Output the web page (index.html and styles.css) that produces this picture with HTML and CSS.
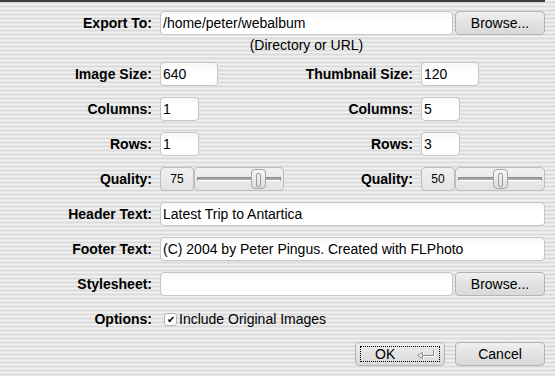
FILE: index.html
```html
<!DOCTYPE html>
<html lang="en">
<head>
    <meta charset="UTF-8">
    <title>Export Web Album</title>
    <link rel="stylesheet" href="styles.css">
</head>
<body>
    <div class="dialog">
        <!-- Export target -->
        <div class="row row-export">
            <label class="lbl">Export To:</label>
            <div class="with-button">
                <div class="field grow">/home/peter/webalbum</div>
                <div class="btn browse">Browse...</div>
            </div>
        </div>
        <div class="row row-note">
            <span></span>
            <div class="note">(Directory or URL)</div>
        </div>

        <!-- Image / thumbnail settings -->
        <div class="row pair">
            <label class="lbl">Image Size:</label>
            <div><div class="field w58">640</div></div>
            <label class="lbl">Thumbnail Size:</label>
            <div><div class="field w58">120</div></div>
        </div>
        <div class="row pair">
            <label class="lbl">Columns:</label>
            <div><div class="field w38">1</div></div>
            <label class="lbl">Columns:</label>
            <div><div class="field w38">5</div></div>
        </div>
        <div class="row pair">
            <label class="lbl">Rows:</label>
            <div><div class="field w38">1</div></div>
            <label class="lbl">Rows:</label>
            <div><div class="field w38">3</div></div>
        </div>
        <div class="row pair">
            <label class="lbl">Quality:</label>
            <div class="value-slider">
                <div class="value">75</div>
                <div class="slider"><span class="track"></span><span class="knob" style="left: 56px"></span></div>
            </div>
            <label class="lbl">Quality:</label>
            <div class="value-slider">
                <div class="value">50</div>
                <div class="slider"><span class="track"></span><span class="knob" style="left: 37px"></span></div>
            </div>
        </div>

        <!-- Page texts -->
        <div class="row">
            <label class="lbl">Header Text:</label>
            <div class="field">Latest Trip to Antartica</div>
        </div>
        <div class="row">
            <label class="lbl">Footer Text:</label>
            <div class="field">(C) 2004 by Peter Pingus. Created with FLPhoto</div>
        </div>
        <div class="row">
            <label class="lbl">Stylesheet:</label>
            <div class="with-button">
                <div class="field grow"></div>
                <div class="btn browse">Browse...</div>
            </div>
        </div>
        <div class="row">
            <label class="lbl">Options:</label>
            <div class="check-line">
                <span class="check">&#10004;</span>
                <span>Include Original Images</span>
            </div>
        </div>

        <!-- Dialog buttons -->
        <div class="actions">
            <div class="btn ok">
                <span class="focus">
                    <span>OK</span>
                    <svg class="ret" width="19" height="10" viewBox="0 0 19 10">
                        <polyline points="16.5,0.5 16.5,6.5 5.5,6.5" fill="none" stroke="#ffffff" stroke-width="1" transform="translate(1,1)"/>
                        <polygon points="0.5,6.5 5.5,3.5 5.5,9.5" fill="none" stroke="#ffffff" stroke-width="1" transform="translate(1,0)"/>
                        <polyline points="16.5,0.5 16.5,6.5 5.5,6.5" fill="none" stroke="#8c8c8c" stroke-width="1"/>
                        <polygon points="0.5,6.5 5.5,3.5 5.5,9.5" fill="none" stroke="#8c8c8c" stroke-width="1"/>
                    </svg>
                </span>
            </div>
            <div class="btn cancel">Cancel</div>
        </div>
    </div>
</body>
</html>
```

FILE: styles.css
```css
/* Basic reset */
* {
    margin: 0;
    padding: 0;
    box-sizing: border-box;
}

/* Striped plastic background */
body {
    width: 555px;
    height: 376px;
    overflow: hidden;
    font-family: 'Liberation Sans', Arial, sans-serif;
    font-size: 14px;
    color: #000;
    background: repeating-linear-gradient(to bottom,
        #f2f2f2 0, #f2f2f2 1px,
        #e4e4e4 1px, #e4e4e4 2px,
        #dbdbdb 2px, #dbdbdb 3px,
        #e6e6e6 3px, #e6e6e6 4px);
}

.dialog {
    border-top: 2px solid #3c3c3c;
    padding-top: 9px;
    width: 545px;
}

/* Form rows */
.row {
    display: grid;
    grid-template-columns: 152px 1fr;
    column-gap: 8px;
    height: 24px;
    margin-bottom: 11px;
}

.row.pair {
    grid-template-columns: 152px 124px 121px 124px;
}

.row-export {
    margin-bottom: 2px;
}

.row-note {
    grid-template-columns: 152px 293px;
    height: 16px;
    margin-bottom: 9px;
}

.note {
    text-align: center;
    line-height: 16px;
}

.lbl {
    font-weight: bold;
    text-align: right;
    line-height: 24px;
    white-space: nowrap;
}

/* Text inputs */
.field {
    height: 24px;
    padding: 0 2px;
    line-height: 22px;
    white-space: nowrap;
    overflow: hidden;
    background: linear-gradient(to bottom, #f7f7f7, #ffffff 40%);
    border: 1px solid #c6c6c6;
    border-radius: 4px;
}

.w58 { width: 58px; }
.w38 { width: 39px; }

.with-button {
    display: flex;
    gap: 2px;
}

.grow {
    flex: 1;
}

/* Buttons */
.btn {
    height: 24px;
    line-height: 22px;
    text-align: center;
    background: linear-gradient(to bottom, #f0f0f0, #e2e2e2 50%, #d9d9d9);
    border: 1px solid #b4b4b4;
    border-radius: 4px;
}

.browse {
    width: 90px;
}

/* Value slider */
.value-slider {
    display: flex;
}

.value {
    width: 34px;
    height: 24px;
    line-height: 22px;
    font-size: 12px;
    text-align: center;
    background: linear-gradient(to bottom, #f0f0f0, #e4e4e4);
    border: 1px solid #bdbdbd;
    border-radius: 4px;
}

.slider {
    position: relative;
    width: 90px;
    height: 24px;
    background: linear-gradient(to bottom, #f0f0f0, #e4e4e4);
    border: 1px solid #bdbdbd;
    border-radius: 4px;
}

.track {
    position: absolute;
    left: 2px;
    right: 2px;
    top: 9px;
    height: 4px;
    border-top: 1px solid #8a8a8a;
    border-bottom: 1px solid #ffffff;
    background: #a8a8a8;
    border-left: 1px solid #8a8a8a;
    border-right: 1px solid #8a8a8a;
}

.knob {
    position: absolute;
    top: 1px;
    width: 15px;
    height: 20px;
    background: linear-gradient(to bottom, #f6f6f6, #dedede);
    border: 1px solid #a6a6a6;
    border-radius: 4px;
}

.knob::after {
    content: "";
    position: absolute;
    left: 4px;
    top: 3px;
    width: 3px;
    height: 12px;
    border: 1px solid #9a9a9a;
    border-radius: 2px;
}

/* Check button */
.check-line {
    display: flex;
    align-items: center;
    gap: 2px;
    padding-left: 4px;
    line-height: 24px;
}

.check {
    width: 13px;
    height: 13px;
    font-size: 10px;
    line-height: 11px;
    text-align: center;
    background: #ffffff;
    border: 1px solid #b4b4b4;
    border-radius: 3px;
}

/* Dialog buttons */
.actions {
    display: flex;
    justify-content: flex-end;
    gap: 10px;
}

.ok,
.cancel {
    width: 90px;
}

.ok {
    padding: 3px 4px;
}

.focus {
    display: flex;
    align-items: center;
    justify-content: space-between;
    height: 16px;
    padding: 0 3px 0 14px;
    border: 1px dotted #000;
    line-height: 14px;
}

.ret {
    display: block;
}
```
